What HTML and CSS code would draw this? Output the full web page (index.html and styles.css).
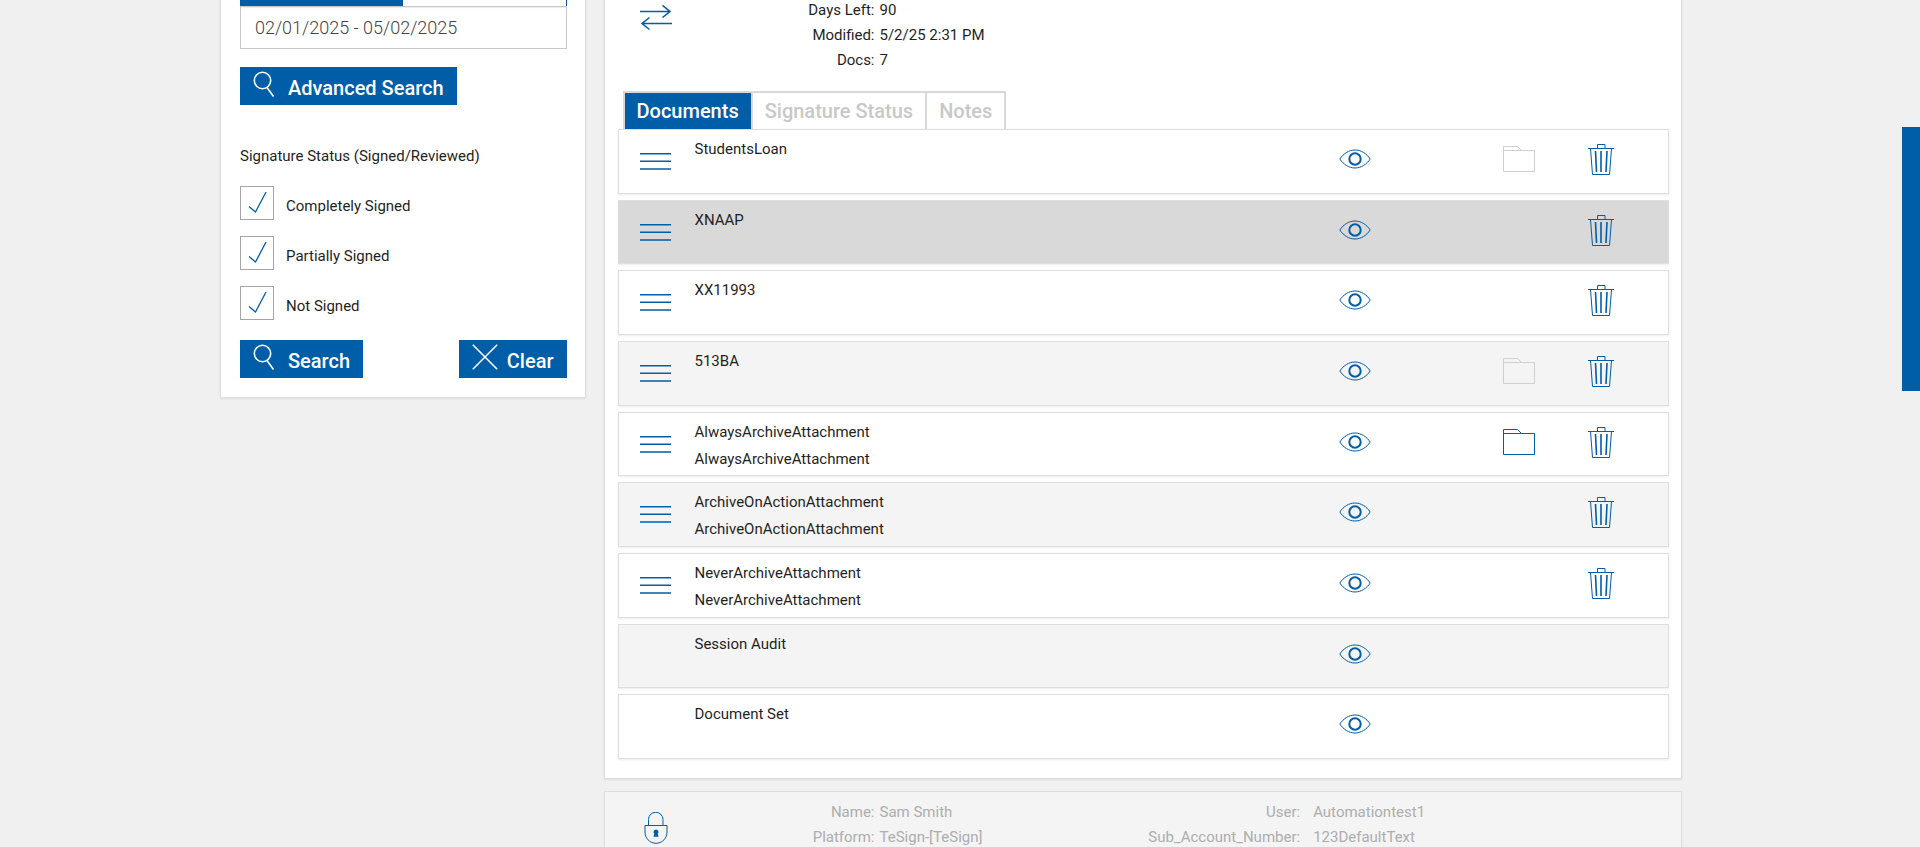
FILE: index.html
```html
<!DOCTYPE html>
<html lang="en">
<head>
<meta charset="utf-8">
<meta name="viewport" content="width=device-width, initial-scale=1">
<title>Sessions</title>
<link rel="stylesheet" href="styles.css">
</head>
<body>
<svg class="sprite" aria-hidden="true">
  <symbol id="search" viewBox="0 0 22 26"><circle cx="9.5" cy="9.5" r="8.2"/><path d="M14 16.5l6.5 9"/></symbol>
  <symbol id="cross" viewBox="0 0 26 26"><path d="M.8.8l24.4 24.4M25.2.8L.8 25.2"/></symbol>
  <symbol id="check" viewBox="0 0 32 32"><path d="M8 19.500l6.500 5.500L25 5"/></symbol>
  <symbol id="swap" viewBox="0 0 32 26"><path d="M0 6.500h30M22.500.500l7.500 6-7.500 6M32 18.500H2M9.500 12.500L2 18.500l7.500 6"/></symbol>
  <symbol id="bars" viewBox="0 0 32 32"><path d="M0 9.800h31M0 17.200h31M0 25h31"/></symbol>
  <symbol id="eye" viewBox="0 0 32 32"><path class="thin" d="M.8 16C4.500 10.500 10 7 16 7s11.500 3.500 15.200 9C27.500 21.500 22 25 16 25S4.500 21.500.8 16z"/><circle class="iris" cx="16" cy="16" r="5.700"/></symbol>
  <symbol id="folder" viewBox="0 0 32 32"><path d="M.5 28.500v-25h14l4 4h13v21zM.5 7.500h18"/></symbol>
  <symbol id="trash" viewBox="0 0 32 32"><path d="M3 5.500h26M12.500 5.500V1.500h7.500v4M5.500 5.500l2 26h17l2-26"/><path class="slats" d="M10.500 8l1 21M16 8v21M22 8l-1 21"/></symbol>
  <symbol id="lock" viewBox="0 0 24 32"><path d="M4.500 13V7.500a7.200 7.200 0 0 1 14.500 0V13M1 13.500h22V20c0 6-4.500 11.300-11 11.300S1 26 1 20z"/><path class="solid" d="M12 17.500a2.500 2.500 0 0 1 1.700 4.300l.8 3h-5l.8-3A2.500 2.500 0 0 1 12 17.500z"/></symbol>
</svg>

<div class="page">
  <aside class="panel filters">
    <form>
      <div class="toggle"><span class="toggle-on"></span></div>
      <input class="date" type="text" aria-label="Date range" value="02/01/2025 - 05/02/2025">
      <button class="btn advanced" type="button"><svg class="i-search"><use href="#search"/></svg>Advanced Search</button>
      <fieldset class="status">
        <legend>Signature Status (Signed/Reviewed)</legend>
        <label class="option"><span class="box"><input type="checkbox" checked><svg><use href="#check"/></svg></span><span class="option-text">Completely Signed</span></label>
        <label class="option"><span class="box"><input type="checkbox" checked><svg><use href="#check"/></svg></span><span class="option-text">Partially Signed</span></label>
        <label class="option"><span class="box"><input type="checkbox" checked><svg><use href="#check"/></svg></span><span class="option-text">Not Signed</span></label>
      </fieldset>
      <div class="actions">
        <button class="btn" type="submit"><svg class="i-search"><use href="#search"/></svg>Search</button>
        <button class="btn clear" type="reset"><svg class="i-cross"><use href="#cross"/></svg>Clear</button>
      </div>
    </form>
  </aside>

  <main class="results">
    <section class="panel session">
      <div class="summary">
        <svg class="i-swap"><use href="#swap"/></svg>
        <dl class="meta">
          <dt>Days Left:</dt><dd>90</dd>
          <dt>Modified:</dt><dd>5/2/25 2:31 PM</dd>
          <dt>Docs:</dt><dd>7</dd>
        </dl>
      </div>
      <div class="tabs" role="tablist">
        <button class="tab active" role="tab" aria-selected="true">Documents</button>
        <button class="tab" role="tab" aria-selected="false">Signature Status</button>
        <button class="tab" role="tab" aria-selected="false">Notes</button>
      </div>
      <ul class="docs">
        <li class="doc">
          <button class="icon handle" aria-label="Reorder"><svg><use href="#bars"/></svg></button>
          <div class="name">StudentsLoan</div>
          <button class="icon view" aria-label="View"><svg><use href="#eye"/></svg></button>
          <button class="icon archive off" aria-label="Archive"><svg><use href="#folder"/></svg></button>
          <button class="icon delete" aria-label="Delete"><svg><use href="#trash"/></svg></button>
        </li>
        <li class="doc selected">
          <button class="icon handle" aria-label="Reorder"><svg><use href="#bars"/></svg></button>
          <div class="name">XNAAP</div>
          <button class="icon view" aria-label="View"><svg><use href="#eye"/></svg></button>
          <button class="icon delete" aria-label="Delete"><svg><use href="#trash"/></svg></button>
        </li>
        <li class="doc">
          <button class="icon handle" aria-label="Reorder"><svg><use href="#bars"/></svg></button>
          <div class="name">XX11993</div>
          <button class="icon view" aria-label="View"><svg><use href="#eye"/></svg></button>
          <button class="icon delete" aria-label="Delete"><svg><use href="#trash"/></svg></button>
        </li>
        <li class="doc">
          <button class="icon handle" aria-label="Reorder"><svg><use href="#bars"/></svg></button>
          <div class="name">513BA</div>
          <button class="icon view" aria-label="View"><svg><use href="#eye"/></svg></button>
          <button class="icon archive off" aria-label="Archive"><svg><use href="#folder"/></svg></button>
          <button class="icon delete" aria-label="Delete"><svg><use href="#trash"/></svg></button>
        </li>
        <li class="doc">
          <button class="icon handle" aria-label="Reorder"><svg><use href="#bars"/></svg></button>
          <div class="name">AlwaysArchiveAttachment<br>AlwaysArchiveAttachment</div>
          <button class="icon view" aria-label="View"><svg><use href="#eye"/></svg></button>
          <button class="icon archive" aria-label="Archive"><svg><use href="#folder"/></svg></button>
          <button class="icon delete" aria-label="Delete"><svg><use href="#trash"/></svg></button>
        </li>
        <li class="doc">
          <button class="icon handle" aria-label="Reorder"><svg><use href="#bars"/></svg></button>
          <div class="name">ArchiveOnActionAttachment<br>ArchiveOnActionAttachment</div>
          <button class="icon view" aria-label="View"><svg><use href="#eye"/></svg></button>
          <button class="icon delete" aria-label="Delete"><svg><use href="#trash"/></svg></button>
        </li>
        <li class="doc">
          <button class="icon handle" aria-label="Reorder"><svg><use href="#bars"/></svg></button>
          <div class="name">NeverArchiveAttachment<br>NeverArchiveAttachment</div>
          <button class="icon view" aria-label="View"><svg><use href="#eye"/></svg></button>
          <button class="icon delete" aria-label="Delete"><svg><use href="#trash"/></svg></button>
        </li>
        <li class="doc">
          <div class="name">Session Audit</div>
          <button class="icon view" aria-label="View"><svg><use href="#eye"/></svg></button>
        </li>
        <li class="doc">
          <div class="name">Document Set</div>
          <button class="icon view" aria-label="View"><svg><use href="#eye"/></svg></button>
        </li>
      </ul>
    </section>

    <section class="panel locked">
      <div class="summary">
        <svg class="i-lock"><use href="#lock"/></svg>
        <dl class="meta">
          <dt>Name:</dt><dd>Sam Smith</dd>
          <dt>Platform:</dt><dd>TeSign-[TeSign]</dd>
        </dl>
        <dl class="meta wide">
          <dt>User:</dt><dd>Automationtest1</dd>
          <dt>Sub_Account_Number:</dt><dd>123DefaultText</dd>
        </dl>
      </div>
    </section>
  </main>
</div>
<button class="drawer" aria-label="Open side panel"></button>
</body>
</html>
```

FILE: styles.css
```css
:root {
  --blue: #005da8;
  --line: #dedede;
}

* {
  box-sizing: border-box;
}

body {
  margin: 0;
  padding-right: 18px;
  background: #f0f0f0;
  color: #1f1f1f;
  font: 15px/20px Roboto, "Liberation Sans", sans-serif;
}

button,
input {
  font-family: inherit;
}

button {
  cursor: pointer;
}

svg {
  display: block;
  fill: none;
  stroke: var(--blue);
  stroke-width: 1;
}

.sprite {
  position: absolute;
  width: 0;
  height: 0;
}

.page {
  display: grid;
  grid-template-columns: 25% minmax(0, 1fr);
  align-items: start;
  gap: 18px;
  max-width: 1462px;
  margin: 0 auto;
}

.panel {
  background: #fff;
  border: 1px solid var(--line);
  box-shadow: 0 1px 2px rgba(0, 0, 0, 0.08);
}

/* Filters */

.filters {
  padding: 0 18px 19px 19px;
  border-top: 0;
}

.toggle {
  display: flex;
  height: 6px;
  border-right: 1px solid var(--blue);
}

.toggle-on {
  flex: 0 0 50%;
  background: var(--blue);
}

.date {
  display: block;
  width: 100%;
  height: 43px;
  padding: 0 15px 0 14px;
  border: 1px solid #c8c8c8;
  background: #fff;
  box-shadow: inset 0 1px 1px rgba(0, 0, 0, 0.08);
  color: #444;
  font-size: 18px;
  font-weight: 300;
}

.btn {
  display: flex;
  gap: 13px;
  height: 38px;
  padding: 4px 13px;
  border: 0;
  background: var(--blue);
  color: #fff;
  font-size: 20px;
  font-weight: 500;
  line-height: 34px;
}

.btn.clear {
  gap: 9px;
}

.btn svg {
  stroke: #fff;
  stroke-width: 1.6;
}

.i-search {
  width: 22px;
  height: 26px;
}

.i-cross {
  width: 26px;
  height: 26px;
}

.advanced {
  margin: 18px 0 41px;
}

.status {
  display: grid;
  gap: 16px;
  margin: 0;
  padding: 0;
  border: 0;
}

.status legend {
  margin-bottom: 20px;
  padding: 0;
}

.option {
  display: flex;
  align-items: center;
  gap: 12px;
}

.option-text {
  padding-top: 5px;
}

.box {
  display: grid;
  width: 34px;
  height: 34px;
}

.box > * {
  grid-area: 1 / 1;
  width: 100%;
  height: 100%;
}

.box input {
  margin: 0;
  appearance: none;
  border: 1px solid #a5a5a5;
  background: #fff;
}

.box svg {
  z-index: 1;
  padding: 1px;
  stroke-width: 1.3;
  pointer-events: none;
  visibility: hidden;
}

.box input:checked + svg {
  visibility: visible;
}

.actions {
  display: flex;
  justify-content: space-between;
  margin-top: 20px;
}

/* Session panels */

.results {
  display: grid;
  gap: 12px;
}

.session {
  padding-bottom: 19px;
  border-top: 0;
}

.summary {
  display: grid;
  grid-template-columns: 65px 17fr 22fr;
  padding-left: 35px;
}

.meta {
  display: grid;
  grid-template-columns: 170px minmax(0, 1fr);
  align-content: start;
  gap: 5px;
  margin: 0;
}

.meta.wide {
  column-gap: 13px;
}

.meta dt {
  text-align: right;
}

.meta dd {
  margin: 0;
}

.i-swap {
  width: 32px;
  height: 26px;
  margin-top: 5px;
  stroke-width: 1.6;
}

.i-lock {
  width: 24px;
  height: 32px;
  margin: 10px 0 0 4px;
}

.solid {
  fill: var(--blue);
  stroke: none;
}

.tabs {
  display: flex;
  width: fit-content;
  margin: 21px 0 0 18px;
  border: 2px solid #d9d9d9;
  border-bottom: 0;
}

.tab {
  height: 36px;
  padding: 0 12px;
  border: 0;
  background: #fff;
  color: #c8c8c8;
  font-size: 20px;
  font-weight: 500;
  line-height: 36px;
}

.tab + .tab {
  border-left: 2px solid #d9d9d9;
}

.tab.active {
  background: var(--blue);
  color: #fff;
}

.docs {
  display: grid;
  grid-auto-rows: 1fr;
  gap: 6px;
  min-height: 630px;
  margin: 0 12px 0 13px;
  padding: 0;
  list-style: none;
}

.doc {
  display: grid;
  grid-template-columns: 55px minmax(0, 1fr) repeat(4, 82px);
  align-items: start;
  padding: 0 26px 0 21px;
  border: 1px solid var(--line);
  background: #fff;
  box-shadow: 0 1px 2px rgba(0, 0, 0, 0.08);
}

.doc:nth-child(even) {
  background: #f4f4f4;
}

.doc.selected {
  background: #d9d9d9;
}

.doc > * {
  grid-row: 1;
}

.name {
  grid-column: 2;
  padding-top: 6px;
  line-height: 27px;
}

.icon {
  display: grid;
  justify-content: center;
  margin-top: 13px;
  padding: 0;
  border: 0;
  background: none;
}

.icon svg {
  width: 32px;
  height: 32px;
}

.handle {
  grid-column: 1;
  justify-content: start;
  margin-top: 14px;
}

.handle svg,
.slats {
  stroke-width: 1.6;
}

.iris {
  stroke-width: 2;
}

.view {
  grid-column: 3;
}

.archive {
  grid-column: 5;
}

.archive.off svg {
  stroke: #cfcfcf;
}

.delete {
  grid-column: 6;
}

.locked {
  padding: 10px 0;
  background: #f4f4f4;
  color: #adadad;
}

.drawer {
  position: fixed;
  top: 127px;
  right: 0;
  width: 18px;
  height: 264px;
  padding: 0;
  border: 0;
  background: var(--blue);
}
```
